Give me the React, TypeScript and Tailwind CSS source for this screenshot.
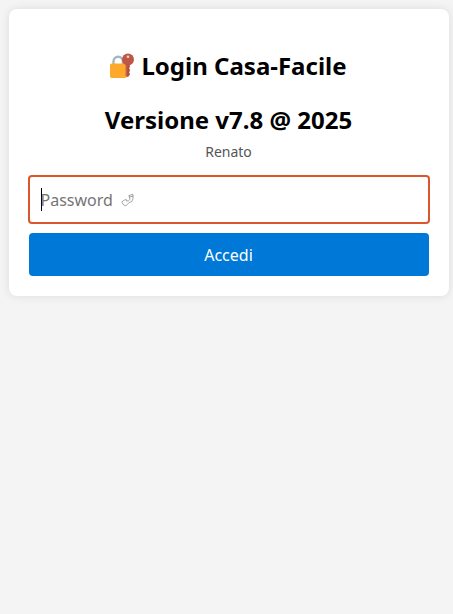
function LockWithKey() {
  return (
    <svg className="mt-[4px] h-[26px] w-[26px] shrink-0" viewBox="0 0 26 26" fill="none">
      <path d="M4.500 12V8.500a4.700 4.700 0 0 1 9.400 0V12" stroke="#a3b7c1" strokeWidth="2.400" />
      <rect x="1" y="10.500" width="16.800" height="14.500" rx="1.800" fill="#ffa92c" />
      <path d="M16.800 10h4v4.200l-.8 1 .8 1v2l-.8 1 .8 1v1.500l-1.800 2.300-2.200-1z" fill="#b04f3e" />
      <path d="M16.800 11h1.500v12.500l-1.500-.5z" fill="#c9604c" />
      <circle cx="19" cy="6.500" r="6" fill="#bd5846" />
      <circle cx="19" cy="3.700" r="1.300" fill="#f0d8d2" />
    </svg>
  );
}

function HandIcon() {
  return (
    <svg className="ml-[8px] h-[14px] w-[13px]" viewBox="0 0 13 14" fill="none" stroke="#858585" strokeWidth="0.750" strokeLinejoin="round" strokeLinecap="round">
      <path d="M8.200 2.400 11.900 1.400 12 5.800 10.700 8.700 8.300 9.400 4.800 12.900 3.400 12.500 1 9.800 1.100 8.700 4.300 6.500 5.400 6.700 5.300 8 7.400 7.800 8.800 6.500z" />
      <path d="m8.400 4 3.500-.8" />
    </svg>
  );
}

export default function App() {
  return (
    <main className="min-h-screen bg-[#f4f4f4] pt-[9px] pl-[9px] font-['Noto_Sans',sans-serif] text-black">
      <section className="h-[287px] w-[440px] rounded-lg bg-white p-5 text-center shadow-[0_0_10px_rgba(0,0,0,0.1)]">
        <h2 className="mt-5 flex h-[34px] justify-center gap-[6px] pr-[2px] text-2xl leading-[34px] font-bold">
          <LockWithKey />
          <span>Login Casa-Facile</span>
        </h2>
        <h2 className="mt-5 pr-px text-2xl leading-[34px] font-bold">Versione v7.8 @ 2025</h2>
        <p className="mt-[5px] pr-px text-sm leading-5 text-[#555555]">Renato</p>
        <div className="-mx-px mt-[13px] flex h-[49px] items-center rounded-[4px] border-2 border-[#dc562b] pl-[11px] text-base text-[#757575]">
          <span className="-mr-[1.500px] h-[23px] w-px bg-black" />
          <span>Password</span>
          <HandIcon />
        </div>
        <button className="mt-[9px] block h-[43px] w-full rounded-[4px] bg-[#0078d7] pr-px text-base text-white">Accedi</button>
      </section>
    </main>
  );
}
